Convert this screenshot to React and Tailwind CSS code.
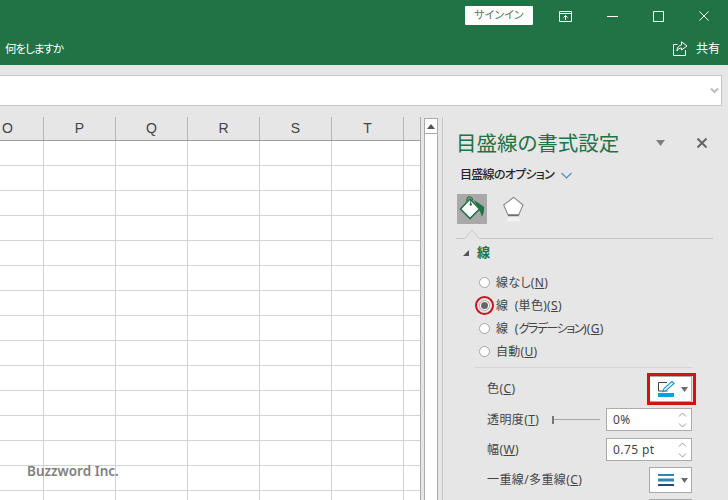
import React from 'react';

const font = { fontFamily: '"Noto Sans", "Noto Sans CJK JP", sans-serif' };
const columns = ['O', 'P', 'Q', 'R', 'S', 'T', ''];
const rows = Array.from({ length: 15 });

function Radio({ checked, ring, children }) {
  return (
    <div className="flex items-center h-[23px]">
      <span className="relative w-[11px] h-[11px] rounded-full border border-[#a6a6a6] bg-white flex items-center justify-center">
        {checked && <span className="w-[7px] h-[7px] rounded-full bg-[#666666]" />}
        {ring && <span className="absolute left-[-5px] top-[-5px] w-[19px] h-[19px] rounded-full border-2 border-[#d0121b]" />}
      </span>
      <span className="ml-[6px] text-[12px] text-[#444444] tracking-[0.3px] [word-spacing:3px]">{children}</span>
    </div>
  );
}

function Spinner({ value }) {
  return (
    <div className="w-[86px] h-[23px] border border-[#ababab] bg-white flex items-center justify-between pl-[6px] pr-[4px]">
      <span className="text-[12px] text-[#444444]">{value}</span>
      <svg width="9" height="18" viewBox="0 0 9 18" fill="none" stroke="#9a9a9a">
        <path d="M1 5.5 4.5 2 8 5.5" />
        <path d="M1 12.5 4.5 16 8 12.5" />
      </svg>
    </div>
  );
}

function Caret() {
  return (
    <svg width="7" height="5" viewBox="0 0 7 5" fill="#6b6b6b">
      <path d="M0 0h7L3.500 5z" />
    </svg>
  );
}

export default function App() {
  return (
    <div className="w-[728px] h-[500px] overflow-hidden flex flex-col bg-[#e6e6e6] [font-feature-settings:'palt']" style={font}>
      {/* title bar */}
      <div className="h-[65px] bg-[#217346] text-white flex flex-col shrink-0">
        <div className="h-[32px] flex items-center justify-end">
          <div className="w-[68px] h-[19px] bg-white rounded-[1px] text-[#4f7d66] text-[11px] flex items-center justify-center mb-[1px]">サインイン</div>
          <svg className="ml-[26px]" width="13" height="11" viewBox="0 0 13 11" fill="none" stroke="white">
            <path d="M.5.5h12v10H.5z" />
            <path d="M.5 2.500h12M6.500 9V4.500M4.500 6.500l2-2 2 2" />
          </svg>
          <svg className="ml-[35px]" width="11" height="11" viewBox="0 0 11 11" stroke="white">
            <path d="M0 5.5h11" />
          </svg>
          <svg className="ml-[35px]" width="11" height="11" viewBox="0 0 11 11" fill="none" stroke="white">
            <path d="M.5.5h10v10H.5z" />
          </svg>
          <svg className="ml-[35px] mr-[19px]" width="10" height="10" viewBox="0 0 10 10" stroke="white">
            <path d="M.5.5l9 9M9.500.5l-9 9" />
          </svg>
        </div>
        <div className="h-[33px] flex items-center justify-between pl-[5px] pr-[8px] text-[12px]">
          <span className="text-[11.5px] tracking-[-1px]">何をしますか</span>
          <div className="flex items-center">
            <svg width="15" height="15" viewBox="0 0 15 15" fill="none" stroke="white">
              <path d="M4.5 3.5H.5v11h12V9" />
              <path d="M8.5 .8 14 5l-5.5 4V7C6.5 7 5 8 4 10c0-3.500 1.800-5.500 4.500-6z" />
            </svg>
            <span className="ml-[8px]">共有</span>
          </div>
        </div>
      </div>

      {/* formula bar */}
      <div className="h-[52px] shrink-0 pt-[10px] pr-[6px]">
        <div className="h-[31px] bg-white border border-[#c6c6c6] border-l-0 flex items-center justify-end pr-[2px]">
          <svg width="9" height="7" viewBox="0 0 9 7" fill="none" stroke="#bdbdbd" strokeWidth="2">
            <path d="M1 1.500 4.500 5 8 1.500" />
          </svg>
        </div>
      </div>

      <div className="flex-1 flex min-h-0">
        {/* sheet */}
        <div className="relative w-[421px] shrink-0 overflow-hidden border-r border-[#ababab]">
          <div className="flex h-[24px] ml-[-28px] border-b border-[#9e9e9e] bg-[#e6e6e6]">
            {columns.map((c, i) => (
              <div key={i} className="w-[72px] shrink-0 border-r border-[#b5b5b5] flex items-center justify-center text-[14px] text-[#444444]" style={{ fontFamily: '"Liberation Sans", sans-serif' }}>
                {c}
              </div>
            ))}
          </div>
          <div className="ml-[-28px] bg-white h-full">
            {rows.map((_, r) => (
              <div key={r} className="flex h-[25px]">
                {columns.map((_, i) => (
                  <div key={i} className="w-[72px] shrink-0 border-r border-b border-[#d4d4d4]" />
                ))}
              </div>
            ))}
          </div>
          <div className="absolute left-[27px] top-[344px] text-[13.5px] font-semibold text-[#808080]">Buzzword Inc.</div>
        </div>

        {/* scrollbar */}
        <div className="w-[21px] shrink-0 pl-[3px] pr-[4px] pt-[1px] flex flex-col">
          <div className="h-[16px] border border-[#ababab] bg-white flex items-center justify-center">
            <svg width="8" height="5" viewBox="0 0 8 5" fill="#555555"><path d="M4 0l4 5H0z" /></svg>
          </div>
          <div className="flex-1 bg-white border-x border-[#ababab]" />
        </div>

        {/* format pane */}
        <div className="flex-1 border-l border-[#c6c6c6] pl-[13px] pr-[15px] pt-[12px] flex flex-col overflow-hidden">
          <div className="h-[28px] shrink-0 flex items-center">
            <span className="text-[20.5px] text-[#217346] w-[200px]">目盛線の書式設定</span>
            <svg width="9" height="6" viewBox="0 0 9 6" fill="#808080"><path d="M0 0h9L4.500 6z" /></svg>
            <svg className="ml-[32px]" width="10" height="10" viewBox="0 0 10 10" stroke="#666666" strokeWidth="2"><path d="M.5.5l9 9M9.500.5l-9 9" /></svg>
          </div>

          <div className="mt-[7px] h-[22px] shrink-0 pl-[4px] flex items-center text-[12px] font-medium text-[#262626]">
            <span className="w-[101px] whitespace-nowrap tracking-[-0.7px]">目盛線のオプション</span>
            <svg width="11" height="7" viewBox="0 0 11 7" fill="none" stroke="#4a90c8" strokeWidth="1.200"><path d="M.5 1 5.500 6l5-5" /></svg>
          </div>

          <div className="mt-[8px] h-[30px] shrink-0 pl-[1px] flex items-center">
            <div className="w-[30px] h-[30px] bg-[#a9a9a9] flex items-center justify-center">
              <svg width="26" height="26" viewBox="0 0 26 26">
                <path d="M15 4 25 10.700C25.500 15 24.500 18.500 22.700 20.700 22 18 21.500 16 20 14z" fill="#217346" />
                <path d="M11 3 20.500 13 11 22.500 1.500 13z" fill="white" stroke="#217346" strokeWidth="1.600" />
                <path d="M7.700 5C8 1.500 9.500.5 10.500.7c2 .3 3.200 1.500 3.200 3.800" fill="none" stroke="#217346" strokeWidth="1.100" />
                <path d="M11.700 3v5" stroke="#217346" strokeWidth="1" />
                <circle cx="11.700" cy="8.500" r="1.200" fill="#217346" />
              </svg>
            </div>
            <svg className="ml-[14px]" width="24" height="26" viewBox="0 0 24 26">
              <path d="M7 20.500h11l1 5H6z" fill="#f2f2f2" />
              <path d="M12.700 1.300 22 9 17.700 19H7L2.700 9z" fill="white" stroke="#8a8a8a" strokeWidth="1.100" />
              <path d="M7 19.300h10.700" stroke="#707070" strokeWidth="1.800" />
            </svg>
          </div>

          <svg className="shrink-0" width="257" height="15" viewBox="0 0 257 15" fill="none" stroke="#c6c6c6">
            <path d="M0 14.500h9L16 6l7 8.500h234" />
          </svg>

          <div className="h-[28px] shrink-0 flex items-center pl-[7px]">
            <svg width="6" height="6" viewBox="0 0 6 6" fill="#555555"><path d="M6 0v6H0z" /></svg>
            <span className="ml-[8px] text-[13px] font-bold text-[#217346]">線</span>
          </div>

          <div className="mt-[4px] shrink-0 pl-[23px] flex flex-col items-start">
            <Radio>線なし(<u>N</u>)</Radio>
            <Radio checked ring>線 (単色)(<u>S</u>)</Radio>
            <Radio>線 (<span className="tracking-[-1.500px]">グラデーション</span>)(<u>G</u>)</Radio>
            <Radio>自動(<u>U</u>)</Radio>
          </div>

          <div className="mt-[4px] shrink-0 ml-[19px] mr-[21px] border-t border-[#d4d4d4]" />

          <div className="pl-[31px] pr-[21px] shrink-0 flex flex-col text-[12px] text-[#444444] tracking-[0.4px]">
            <div className="flex items-center justify-between h-[26px] mt-[8px] shrink-0">
              <span>色(<u>C</u>)</span>
              <div className="relative w-[43px] h-[26px] bg-white border border-[#ababab] flex items-center pl-[8px] gap-[6px]">
                <svg width="17" height="16" viewBox="0 0 17 16" fill="none">
                  <path d="M9 1.500H.5V10h9" stroke="#444444" />
                  <path d="M14 .5 16 2.500 8 9.500 5 10.500 6 7.500z" fill="white" stroke="#1f9bd8" strokeWidth="1.200" />
                  <path d="M0 12h16v4H0z" fill="#00a2e8" />
                </svg>
                <Caret />
                <span className="absolute left-[-3px] top-[-4px] w-[49px] h-[32px] border-[3px] border-[#d0121b]" />
              </div>
            </div>

            <div className="flex items-center justify-between h-[23px] mt-[6px] shrink-0">
              <div className="flex items-center">
                <span className="w-[65px]">透明度(<u>T</u>)</span>
                <span className="w-[2px] h-[8px] bg-[#777777]" />
                <span className="w-[46px] h-[1px] bg-[#a6a6a6]" />
              </div>
              <Spinner value="0%" />
            </div>

            <div className="flex items-center justify-between h-[23px] mt-[7px] shrink-0">
              <span>幅(<u>W</u>)</span>
              <Spinner value="0.75 pt" />
            </div>

            <div className="flex items-center justify-between h-[26px] mt-[6px] shrink-0">
              <span>一重線/多重線(<u>C</u>)</span>
              <div className="w-[43px] h-[26px] bg-white border border-[#ababab] flex items-center pl-[8px] gap-[6px]">
                <svg width="17" height="12" viewBox="0 0 17 12">
                  <path d="M0 0h16v2H0z" fill="#2e86b8" />
                  <path d="M0 4.500h16v3H0z" fill="#2e86b8" />
                  <path d="M0 10h16v2H0z" fill="#1f4e6b" />
                </svg>
                <Caret />
              </div>
            </div>

            <div className="ml-auto w-[43px] h-[26px] mt-[6px] bg-white border border-[#ababab] shrink-0" />
          </div>
        </div>
      </div>
    </div>
  );
}
